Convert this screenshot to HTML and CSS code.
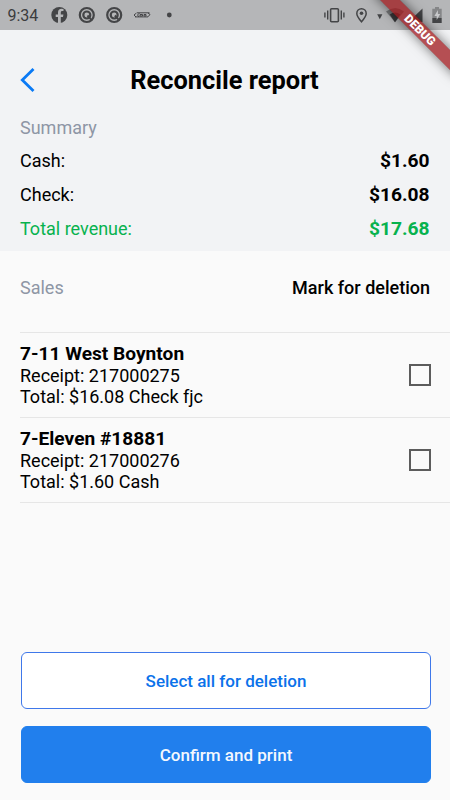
FILE: index.html
```html
<!DOCTYPE html>
<html lang="en">
<head>
<meta charset="utf-8">
<title>Reconcile report</title>
<link rel="stylesheet" href="styles.css">
</head>
<body>
<div class="screen">
  <div class="status">
    <span class="clock">9:34</span>
    <svg class="status-icons" width="410" height="30" viewBox="40 0 410 30">
      <g fill="#444547">
        <circle cx="59.3" cy="15" r="8"/>
        <path fill="#b5b6b8" d="M58 23v-6h-2.300v-2.600H58v-2c0-2.500 1.400-3.700 3.500-3.700l2 .2v2.200h-1.200c-1.100 0-1.500.7-1.500 1.500v1.800h2.600l-.4 2.600h-2.200v6z"/>
      </g>
      <g id="q" fill="none" stroke="#444547">
        <circle cx="86.800" cy="15" r="7" stroke-width="2.200"/>
        <circle cx="86.800" cy="15" r="3.500" stroke-width="2.200"/>
        <path d="M87.500 15.500l3.700 4.200" stroke-width="2"/>
      </g>
      <use href="#q" x="27.400"/>
      <g fill="none" stroke="#444547" stroke-width="1">
        <path d="M137 12.800h12.500M135 16.900h13"/>
        <path d="M136.500 13l-2.500 2 2 2M139.500 13l-2 2 1.500 2M140 14.500h2.500v1.500h-2.500zM144 14.500h2v1.500h-2zM148 13l2 1.500-2 2.300"/>
      </g>
      <circle cx="169.300" cy="15" r="2.400" fill="#444547"/>
      <g fill="none" stroke="#444547">
        <rect x="330.600" y="8.700" width="7.800" height="13" rx="1" stroke-width="1.600"/>
        <path stroke-width="1.400" d="M327.700 10.500v9M341.300 10.500v9M324.900 12.500v5M343.900 12.500v5"/>
        <path stroke-width="1.500" d="M361.500 21.800c-2.800-3.400-4.700-5.900-4.700-8.400a4.700 4.700 0 0 1 9.400 0c0 2.500-1.900 5-4.700 8.400z"/>
      </g>
      <circle cx="361.500" cy="13.300" r="1.800" fill="#444547"/>
      <path fill="#444547" d="M377.200 14.200h5.200l-2.600 5z"/>
      <path fill="#77787a" d="M386 11.500q9.500-7 18 0l-9 10.700z"/>
      <path fill="#37383a" d="M389.700 14.500q5.500-4 10.600 0l-5.300 7.700z"/>
      <path fill="#444547" d="M422.500 8.500V22h-14z"/>
      <path fill="#858688" d="M435 7h4v1.700h2.700v9.300h-9.400V8.700h2.700z"/>
      <path fill="#444547" d="M432.300 18h9.400v5h-9.400z"/>
      <path fill="#c8c9cb" d="M437.900 10l-3.500 6h2.300v4l3.500-6h-2.300z"/>
    </svg>
  </div>

  <section class="summary">
    <header class="title-row">
      <svg class="back" width="16" height="26" viewBox="0 0 16 26"><path d="M13.500 2L2.300 13l11.200 11" fill="none" stroke="#0a7af5" stroke-width="2.800"/></svg>
      <h1>Reconcile report</h1>
    </header>
    <div class="row muted"><span>Summary</span></div>
    <div class="row"><span>Cash:</span><b>$1.60</b></div>
    <div class="row"><span>Check:</span><b>$16.08</b></div>
    <div class="row total"><span>Total revenue:</span><b>$17.68</b></div>
  </section>

  <div class="sales-head"><span class="muted">Sales</span><span class="mark">Mark for deletion</span></div>

  <ul class="sales">
    <li><div><h2>7-11 West Boynton</h2><p>Receipt: 217000275</p><p>Total: $16.08 Check fjc</p></div><span class="box"></span></li>
    <li><div><h2>7-Eleven #18881</h2><p>Receipt: 217000276</p><p>Total: $1.60 Cash</p></div><span class="box"></span></li>
  </ul>

  <div class="actions">
    <button class="outline">Select all for deletion</button>
    <button class="filled">Confirm and print</button>
  </div>

  <div class="debug-corner"><div class="debug-band">DEBUG</div></div>
</div>
</body>
</html>
```
FILE: styles.css
```css
* { box-sizing: border-box; margin: 0; padding: 0; }
body { font-family: Roboto, "Liberation Sans", sans-serif; color: #000; }
.screen {
  position: relative;
  width: 450px;
  height: 800px;
  overflow: hidden;
  background: #fafafa;
  display: flex;
  flex-direction: column;
}
.status { height: 30px; flex: none; display: flex; background: #b5b6b8; }
.clock { width: 40px; padding-left: 7.500px; font-size: 16px; line-height: 31px; color: #3b3c3e; }
.status-icons { flex: none; display: block; }
.summary { height: 221px; flex: none; background: #f2f3f5; }
.title-row { height: 82px; padding: 20px 20px 0; display: flex; align-items: flex-start; }
.back { margin-top: 17px; flex: none; }
h1 { flex: 1; padding-right: 17px; text-align: center; font-size: 25.400px; line-height: 61px; font-weight: 700; }
.row {
  height: 34px;
  padding: 0 20.500px 0 20px;
  display: flex;
  justify-content: space-between;
  align-items: center;
  font-size: 18px;
  line-height: 22px;
}
.row.muted { height: 32px; }
.row b { font-size: 19.200px; font-weight: 700; }
.muted { color: #8e96a5; }
.total { color: #07b24e; }
.sales-head {
  height: 81px;
  flex: none;
  padding: 25px 20px 0;
  display: flex;
  justify-content: space-between;
  font-size: 18px;
  line-height: 23px;
}
.mark { font-weight: 500; }
.sales { list-style: none; margin-left: 20px; border-top: 1px solid #e6e6e6; }
.sales li {
  height: 85px;
  padding-right: 19px;
  border-bottom: 1px solid #e6e6e6;
  display: flex;
  justify-content: space-between;
  align-items: center;
}
h2 { font-size: 19.150px; line-height: 22px; font-weight: 700; }
p { font-size: 18px; line-height: 21px; }
.box { width: 22px; height: 22px; border: 2px solid #5c5c5c; }
.actions { margin-top: auto; padding: 0 19px 17px 21px; display: flex; flex-direction: column; gap: 17px; }
button { height: 57px; border-radius: 6px; font: 500 17px Roboto, sans-serif; }
.outline { background: #fff; border: 1px solid #3f78ea; color: #0b72ea; }
.filled { background: #217fed; border: 1px solid #217fed; color: #f4f8fe; }
.debug-corner { position: absolute; top: 0; right: 0; width: 100px; height: 100px; overflow: hidden; }
.debug-band {
  position: absolute;
  left: 10px;
  top: 23px;
  width: 120px;
  height: 14px;
  transform: rotate(45deg);
  background: rgba(160, 24, 28, .75);
  box-shadow: 0 0 12px rgba(0, 0, 0, .55);
  color: #fff;
  font-size: 12px;
  line-height: 14px;
  font-weight: 900;
  text-align: center;
}
```
